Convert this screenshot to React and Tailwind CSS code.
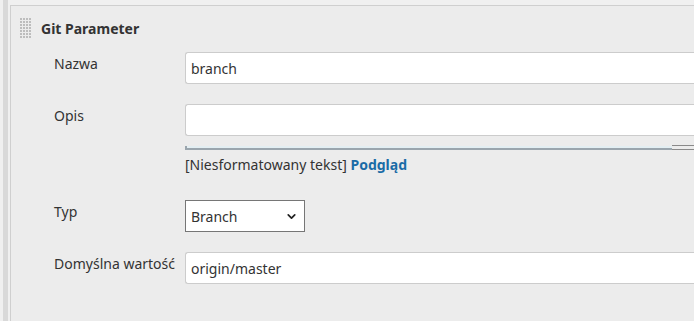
import { ChevronDown } from "lucide-react"

function Grip() {
  const dots = []
  for (let r = 0; r < 7; r++) {
    for (let c = 0; c < 4; c++) {
      dots.push(<rect key={`${r}-${c}`} x={c * 3} y={r * 3} width="2" height="2" fill="#bdbdbd" />)
    }
  }
  return (
    <svg width="12" height="21" viewBox="0 0 12 21" className="shrink-0">
      {dots}
    </svg>
  )
}

function Row({ label, children, className = "" }) {
  return (
    <div className={`flex ${className}`}>
      <div className="w-[174px] shrink-0 pl-[43px] pt-[2px] text-[14px] leading-[20px] text-[#333]">{label}</div>
      <div className="flex-1 min-w-0">{children}</div>
    </div>
  )
}

export default function App() {
  return (
    <div className="h-[321px] w-[694px] overflow-hidden bg-[#f0f0f0] pl-[3px] font-['Noto_Sans',sans-serif] text-[#333]">
      <div className="flex h-full">
        <div className="w-[5px] shrink-0 bg-[#d9d9d9]" />
        <div className="w-[2px] shrink-0" />
        <div className="mt-[5px] flex-1 border-l border-t border-[#cfcfcf] bg-[#ececec]">
          <div className="flex items-center gap-[9px] pl-[9px] pt-[12px]">
            <Grip />
            <span className="text-[14px] font-bold leading-[20px] text-[#333]">Git Parameter</span>
          </div>

          <Row label="Nazwa" className="mt-[13px]">
            <div className="flex h-[32px] items-center rounded-l-[3px] border border-r-0 border-[#cccccc] bg-white px-[5px] text-[14px]">
              branch
            </div>
          </Row>

          <Row label="Opis" className="mt-[20px]">
            <div className="h-[32px] rounded-l-[3px] border border-r-0 border-[#cccccc] bg-white" />
            <div className="relative mt-[10px] h-[4px] border-b-2 border-l-2 border-[#9aa5ad] bg-[#e3eef2]">
              <div className="absolute bottom-[-2px] right-0 h-[5px] w-[22px] border-y border-[#8a8a8a] bg-[#ececec]" />
            </div>
            <div className="mt-[5px] text-[14px] leading-[20px]">
              [Niesformatowany tekst] <span className="font-bold text-[#1a6ba6]">Podgląd</span>
            </div>
          </Row>

          <Row label="Typ" className="mt-[25px]">
            <div className="flex h-[32px] w-[120px] items-center justify-between border border-[#767676] bg-white pl-[5px] pr-[6px] text-[14px]">
              <span>Branch</span>
              <ChevronDown size={13} strokeWidth={3.2} className="text-[#222]" />
            </div>
          </Row>

          <Row label="Domyślna wartość" className="mt-[20px]">
            <div className="flex h-[32px] items-center rounded-l-[3px] border border-r-0 border-[#cccccc] bg-white px-[5px] text-[14px]">
              origin/master
            </div>
          </Row>
        </div>
      </div>
    </div>
  )
}
